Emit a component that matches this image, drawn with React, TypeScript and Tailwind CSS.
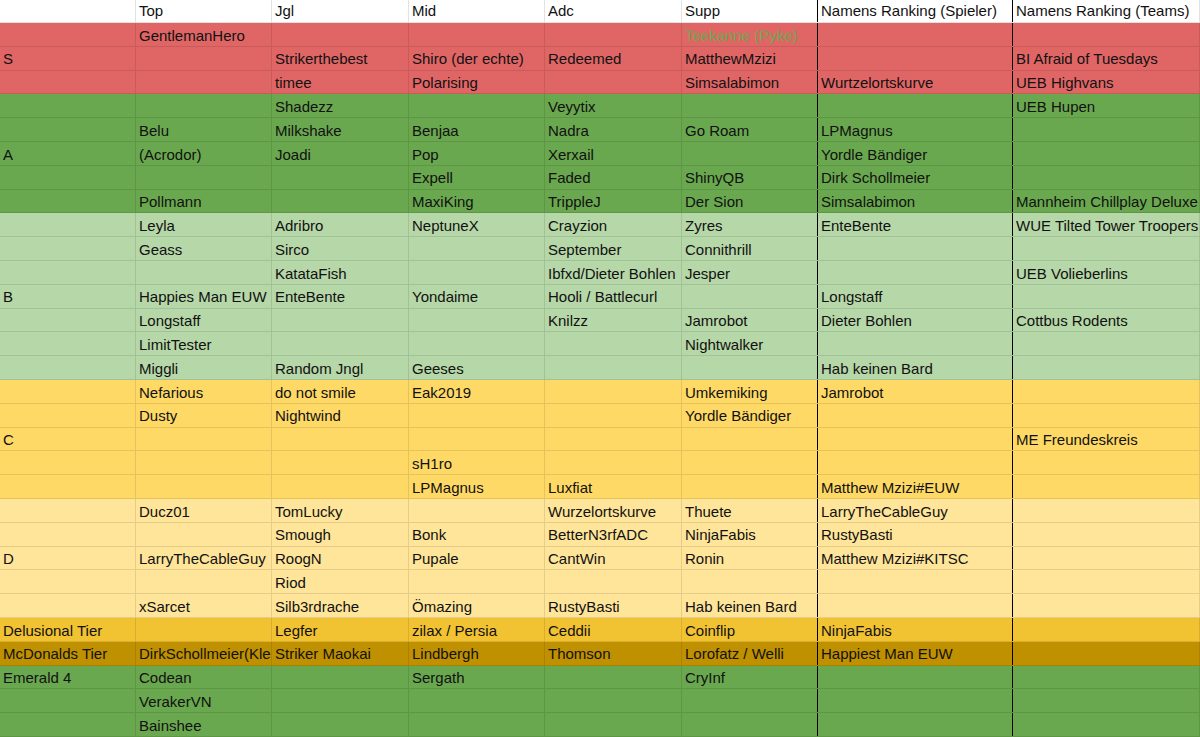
const colClasses = [
  "w-[136px]",
  "w-[136px]",
  "w-[137px]",
  "w-[136px]",
  "w-[137px]",
  "w-[136px] border-r-black",
  "w-[195px] border-r-black",
  "flex-1",
];

const header = ["", "Top", "Jgl", "Mid", "Adc", "Supp", "Namens Ranking (Spieler)", "Namens Ranking (Teams)"];

type Row = { bg: string; cells: string[] };

const red = "bg-[#e06666]";
const darkGreen = "bg-[#6aa84f]";
const lightGreen = "bg-[#b6d7a8]";
const yellow = "bg-[#ffd966]";
const lightYellow = "bg-[#ffe599]";
const delusional = "bg-[#f1c232]";
const mcdonalds = "bg-[#bf9000]";

const rows: Row[] = [
  { bg: red, cells: ["", "GentlemanHero", "", "", "", "Teekanne (Pyke)", "", ""] },
  { bg: red, cells: ["S", "", "Strikerthebest", "Shiro (der echte)", "Redeemed", "MatthewMzizi", "", "BI Afraid of Tuesdays"] },
  { bg: red, cells: ["", "", "timee", "Polarising", "", "Simsalabimon", "Wurtzelortskurve", "UEB Highvans"] },
  { bg: darkGreen, cells: ["", "", "Shadezz", "", "Veyytix", "", "", "UEB Hupen"] },
  { bg: darkGreen, cells: ["", "Belu", "Milkshake", "Benjaa", "Nadra", "Go Roam", "LPMagnus", ""] },
  { bg: darkGreen, cells: ["A", "(Acrodor)", "Joadi", "Pop", "Xerxail", "", "Yordle Bändiger", ""] },
  { bg: darkGreen, cells: ["", "", "", "Expell", "Faded", "ShinyQB", "Dirk Schollmeier", ""] },
  { bg: darkGreen, cells: ["", "Pollmann", "", "MaxiKing", "TrippleJ", "Der Sion", "Simsalabimon", "Mannheim Chillplay Deluxe"] },
  { bg: lightGreen, cells: ["", "Leyla", "Adribro", "NeptuneX", "Crayzion", "Zyres", "EnteBente", "WUE Tilted Tower Troopers"] },
  { bg: lightGreen, cells: ["", "Geass", "Sirco", "", "September", "Connithrill", "", ""] },
  { bg: lightGreen, cells: ["", "", "KatataFish", "", "Ibfxd/Dieter Bohlen", "Jesper", "", "UEB Volieberlins"] },
  { bg: lightGreen, cells: ["B", "Happies Man EUW", "EnteBente", "Yondaime", "Hooli / Battlecurl", "", "Longstaff", ""] },
  { bg: lightGreen, cells: ["", "Longstaff", "", "", "Knilzz", "Jamrobot", "Dieter Bohlen", "Cottbus Rodents"] },
  { bg: lightGreen, cells: ["", "LimitTester", "", "", "", "Nightwalker", "", ""] },
  { bg: lightGreen, cells: ["", "Miggli", "Random Jngl", "Geeses", "", "", "Hab keinen Bard", ""] },
  { bg: yellow, cells: ["", "Nefarious", "do not smile", "Eak2019", "", "Umkemiking", "Jamrobot", ""] },
  { bg: yellow, cells: ["", "Dusty", "Nightwind", "", "", "Yordle Bändiger", "", ""] },
  { bg: yellow, cells: ["C", "", "", "", "", "", "", "ME Freundeskreis"] },
  { bg: yellow, cells: ["", "", "", "sH1ro", "", "", "", ""] },
  { bg: yellow, cells: ["", "", "", "LPMagnus", "Luxfiat", "", "Matthew Mzizi#EUW", ""] },
  { bg: lightYellow, cells: ["", "Ducz01", "TomLucky", "", "Wurzelortskurve", "Thuete", "LarryTheCableGuy", ""] },
  { bg: lightYellow, cells: ["", "", "Smough", "Bonk", "BetterN3rfADC", "NinjaFabis", "RustyBasti", ""] },
  { bg: lightYellow, cells: ["D", "LarryTheCableGuy", "RoogN", "Pupale", "CantWin", "Ronin", "Matthew Mzizi#KITSC", ""] },
  { bg: lightYellow, cells: ["", "", "Riod", "", "", "", "", ""] },
  { bg: lightYellow, cells: ["", "xSarcet", "Silb3rdrache", "Ömazing", "RustyBasti", "Hab keinen Bard", "", ""] },
  { bg: delusional, cells: ["Delusional Tier", "", "Legfer", "zilax / Persia", "Ceddii", "Coinflip", "NinjaFabis", ""] },
  { bg: mcdonalds, cells: ["McDonalds Tier", "DirkSchollmeier(Kleiner Cousin)", "Striker Maokai", "Lindbergh", "Thomson", "Lorofatz / Welli", "Happiest Man EUW", ""] },
  { bg: darkGreen, cells: ["Emerald 4", "Codean", "", "Sergath", "", "CryInf", "", ""] },
  { bg: darkGreen, cells: ["", "VerakerVN", "", "", "", "", "", ""] },
  { bg: darkGreen, cells: ["", "Bainshee", "", "", "", "", "", ""] },
];

export default function App() {
  return (
    <div className="w-[1200px] h-[737px] overflow-hidden bg-white font-['Liberation_Sans',Arial,sans-serif] text-[15px] text-[#111]">
      {/* header row */}
      <div className="flex h-[23px] border-b border-[#e2e2e2]">
        {header.map((h, i) => (
          <div
            key={i}
            className={`${colClasses[i]} shrink-0 border-r border-[#e2e2e2] px-[3px] flex items-center overflow-hidden whitespace-nowrap`}
          >
            {h}
          </div>
        ))}
      </div>

      {rows.map((row, r) => (
        <div key={r} className={`flex h-[23.8px] border-b border-black/10 ${row.bg}`}>
          {row.cells.map((c, i) => (
            <div
              key={i}
              className={`${colClasses[i]} shrink-0 border-r border-black/10 px-[3px] pt-[3px] flex items-center overflow-hidden whitespace-nowrap`}
            >
              {c === "Teekanne (Pyke)" ? <span className="text-[#6aa84f]">{c}</span> : c}
            </div>
          ))}
        </div>
      ))}
    </div>
  );
}
